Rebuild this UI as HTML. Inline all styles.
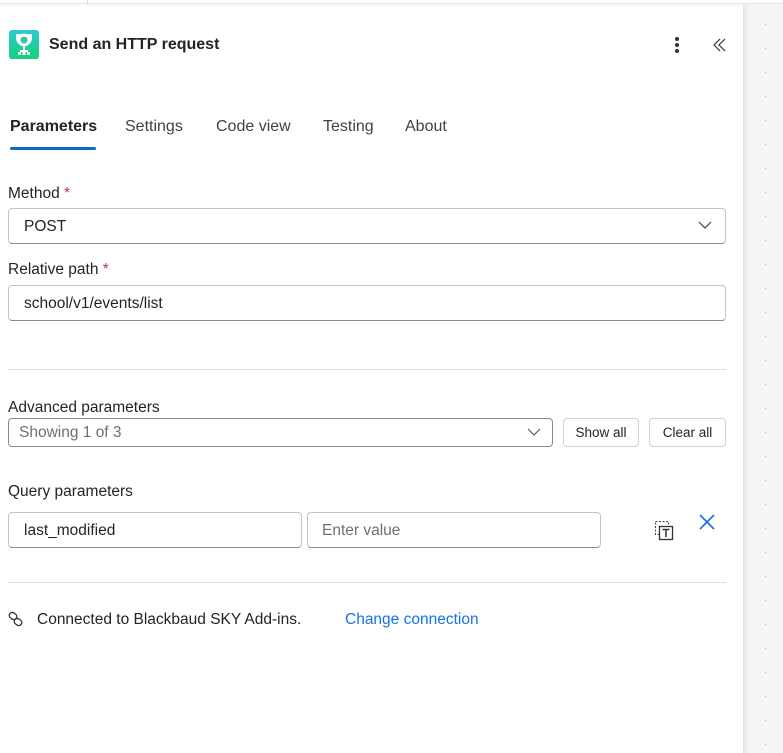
<!DOCTYPE html>
<html><head><style>
*{margin:0;padding:0;box-sizing:border-box}
body{width:783px;height:753px;overflow:hidden;background:#fff;font-family:"Liberation Sans",sans-serif;color:#242424;position:relative}
.a{position:absolute}
.lbl{font-size:15.5px;color:#242424}
.inp{position:absolute;border:1px solid #c4c4c4;border-bottom-color:#8a8a8a;border-radius:4px;height:36px;font-size:15.5px;padding:0 15px;line-height:36px;background:#fff}
.btn{position:absolute;border:1px solid #d1d1d1;border-radius:4px;height:29px;font-size:13.5px;line-height:28px;text-align:center;background:#fff}
.star{color:#c4314b}
</style></head><body>
<div class="a" style="left:0;top:0;width:783px;height:4px;background:#fff;border-bottom:1px solid #e6e6e6;box-shadow:0 1px 2px rgba(0,0,0,.06)"></div>
<div class="a" style="left:87px;top:0;width:1px;height:4px;background:#ddd"></div>
<div class="a" style="left:743px;top:5px;width:40px;height:748px;background:#f5f5f5;border-left:1px solid #e3e3e3"></div>
<div class="a" style="left:744px;top:5px;width:6px;height:748px;background:linear-gradient(90deg,#e8e8e8,#f5f5f5)"></div>
<div class="a" style="left:765px;top:4px;width:1px;height:749px;background:repeating-linear-gradient(180deg,transparent 0 20px,#bbb 20px 21px,transparent 21px 24px)"></div>

<svg class="a" style="left:9px;top:30px" width="30" height="29" viewBox="0 0 30 29">
<defs><linearGradient id="g" x1="0" y1="0" x2="0" y2="1"><stop offset="0" stop-color="#30c7ce"/><stop offset="1" stop-color="#13d27a"/></linearGradient></defs>
<rect width="30" height="29" rx="3" fill="url(#g)"/>
<path d="M7 4 H23 V8 A8 8 0 0 1 7 8 Z" fill="#fff"/>
<circle cx="15" cy="10" r="6.5" fill="#fff"/><circle cx="15" cy="10" r="3.5" fill="#2bc8b4"/>
<rect x="14" y="17" width="2" height="3" fill="#fff"/><rect x="11" y="20" width="8" height="2" fill="#fff"/><rect x="9" y="22" width="3" height="3" fill="#fff"/><rect x="13.5" y="22" width="3" height="3" fill="#fff"/><rect x="18" y="22" width="3" height="3" fill="#fff"/>
</svg>
<div class="a" style="left:49px;top:36px;font-size:16px;font-weight:bold;color:#242424">Send an HTTP request</div>
<div class="a" style="left:675px;top:37px;width:4px;height:4px;border-radius:2px;background:#333;box-shadow:0 6px 0 #333,0 12px 0 #333"></div>
<svg class="a" style="left:712px;top:37px" width="16" height="16" viewBox="0 0 16 16"><path d="M8 2 L2 8 L8 14 M13 2 L7 8 L13 14" fill="none" stroke="#333" stroke-width="1.2"/></svg>

<div class="a" style="left:10px;top:118px;font-size:16px;font-weight:bold">Parameters</div>
<div class="a" style="left:10px;top:147px;width:86px;height:3px;border-radius:2px;background:#0f6cbd"></div>
<div class="a" style="left:125px;top:118px;font-size:16px;color:#424242">Settings</div>
<div class="a" style="left:216px;top:118px;font-size:16px;color:#424242">Code view</div>
<div class="a" style="left:323px;top:118px;font-size:16px;color:#424242">Testing</div>
<div class="a" style="left:405px;top:118px;font-size:16px;color:#424242">About</div>

<div class="a lbl" style="left:8px;top:185px">Method <span class="star">*</span></div>
<div class="inp" style="left:8px;top:208px;width:718px">POST</div>
<svg class="a" style="left:698px;top:220px" width="14" height="10"><path d="M1 2 L7 8 L13 2" fill="none" stroke="#424242" stroke-width="1.2"/></svg>
<div class="a lbl" style="left:8px;top:261px">Relative path <span class="star">*</span></div>
<div class="inp" style="left:8px;top:285px;width:718px">school/v1/events/list</div>

<div class="a" style="left:8px;top:369px;width:718px;height:1px;background:#e0e0e0"></div>
<div class="a lbl" style="left:8px;top:399px">Advanced parameters</div>
<div class="inp" style="left:8px;top:418px;width:545px;height:29px;line-height:28px;padding-left:10px;color:#707070;border-color:#8a8a8a">Showing 1 of 3</div>
<svg class="a" style="left:527px;top:428px" width="14" height="9"><path d="M1 1 L7 7 L13 1" fill="none" stroke="#555" stroke-width="1.1"/></svg>
<div class="btn" style="left:563px;top:418px;width:76px">Show all</div>
<div class="btn" style="left:649px;top:418px;width:77px">Clear all</div>

<div class="a lbl" style="left:8px;top:483px">Query parameters</div>
<div class="inp" style="left:8px;top:512px;width:294px">last_modified</div>
<div class="inp" style="left:307px;top:512px;width:294px;padding-left:14px;color:#707070">Enter value</div>
<svg class="a" style="left:654px;top:520px" width="20" height="21" viewBox="0 0 20 21"><rect x="1.5" y="1.5" width="13" height="13" fill="none" stroke="#444" stroke-dasharray="2 1.5"/><rect x="5.5" y="6.5" width="13" height="13" fill="#fff" stroke="#333" stroke-width="1.3"/><path d="M8.5 9.5 H15.5 M12 9.5 V17" stroke="#333" stroke-width="1.5"/></svg>
<svg class="a" style="left:698px;top:513px" width="18" height="18"><path d="M2 2 L16 16 M16 2 L2 16" stroke="#1473e6" stroke-width="1.6"/></svg>

<div class="a" style="left:8px;top:582px;width:718px;height:1px;background:#e0e0e0"></div>
<svg class="a" style="left:8px;top:611px" width="16" height="16" viewBox="0 0 16 16"><rect x="1" y="2" width="8" height="6" rx="3" transform="rotate(35 5 5)" fill="none" stroke="#333" stroke-width="1.3"/><rect x="6" y="8" width="8" height="6" rx="3" transform="rotate(35 10 11)" fill="none" stroke="#333" stroke-width="1.3"/></svg>
<div class="a lbl" style="left:37px;top:611px">Connected to Blackbaud SKY Add-ins.</div>
<div class="a lbl" style="left:345px;top:611px;color:#1473e6">Change connection</div>
</body></html>
